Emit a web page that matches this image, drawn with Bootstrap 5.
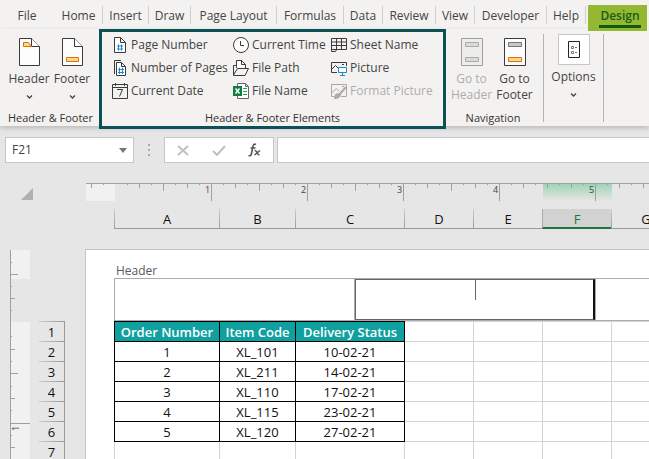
<!DOCTYPE html>
<html lang="en">
<head>
<meta charset="utf-8">
<meta name="viewport" content="width=device-width, initial-scale=1">
<title>Header &amp; Footer Elements</title>
<link href="https://cdn.jsdelivr.net/npm/bootstrap@5.3.0/dist/css/bootstrap.min.css" rel="stylesheet">
<style>
  body { font-family: "Open Sans", "Noto Sans", sans-serif; font-size: 12px; line-height: 16px; color: #444; background: #e6e6e6; }
  button { color: inherit; background: none; border: 0; padding: 0; }
  svg { display: block; flex: none; }

  /* Ribbon tabs */
  .tabs { display: grid; grid-template-columns: 55px 48px 46px 42px 86px 67px 39px 53px 39px 72px 39px 61px; height: 29px; background: #f3f2f1; }
  .tabs a { color: #444; text-decoration: none; text-align: center; white-space: nowrap; margin-top: 6px; height: 18px; line-height: 19px; border-right: 1px solid #d0cfce; }
  .tabs a:first-child { border-color: transparent; }
  .tabs a.active { margin: 5px 0 0 2px; height: 26px; line-height: 21px; background: #95b833; color: #185c18; font-weight: 600; border: 0; z-index: 2; padding: 0 6px 0 11px; }
  .tabs a.active span { display: block; height: 23px; border-bottom: 3px solid #10590f; }

  /* Ribbon groups */
  .ribbon { height: 97px; background: #f3f2f1; box-shadow: 0 2px 5px rgba(0,0,0,.2); position: relative; z-index: 1; }
  .group { display: flex; flex-direction: column; justify-content: space-between; align-items: center; padding-top: 9px; }
  .caption { height: 16px; color: #333; font-size: 11px; white-space: nowrap; }
  .framed { width: 347px; height: 100px; border: 3px solid #0b5156; padding-top: 1px; }
  .commands { display: grid; grid-template-columns: 121px 98px 102px; grid-auto-flow: column; grid-template-rows: repeat(3, 23px); width: 100%; padding-left: 10px; }
  .commands button { display: flex; align-items: center; gap: 3px; white-space: nowrap; }
  .big { width: 43px; display: flex; flex-direction: column; align-items: center; white-space: nowrap; }
  .big svg:first-child { margin-bottom: 5px; }
  .big:disabled, .commands button:disabled { opacity: .4; }
  .rule { width: 1px; height: 88px; margin-top: 5px; background: #b5b5b5; }
  .g-one { width: 99px; padding-left: 2px; }
  .g-nav { width: 97px; padding-right: 3px; }
  .g-opt { width: 59px; padding-top: 5px; justify-content: flex-start; }
  .optbox { border: 1px solid #c6c6c6; background: #fff; padding: 6px 9px; margin-bottom: 4px; }

  /* Formula bar */
  .fbar { padding: 11px 0 0 5px; gap: 3px; }
  .field { height: 26px; background: #fff; border: 1px solid #c6c6c6; border-radius: 0; outline: 0; }
  .namebox { width: 129px; padding: 0 6px; }
  .namebox input { border: 0; outline: 0; width: 90px; color: #444; padding: 0; }
  .dots { width: 24px; }
  .tools { width: 110px; padding: 0 12px; }
  .formula { flex: 1; min-width: 0; border-right: 0; }

  /* Rulers and headings */
  .hgrid { padding-top: 20px; }
  .corner { width: 86px; padding: 4px 0 0 21px; }
  .hruler { flex: 1; min-width: 0; }
  .hruler text, .vruler text { font-size: 9px; fill: #444; }
  .cols { height: 20px; margin: 8px 0 20px 114px; font-size: 13px; line-height: 20px; color: #111; overflow: hidden; background: linear-gradient(#999,#999) bottom/100% 1px no-repeat; }
  .cols div { flex: none; width: 69px; padding-left: 1px; text-align: center; background: linear-gradient(#ccc,#999) left/1px 100% no-repeat; }
  .w-a, .cols .w-a { width: 105px; }
  .w-b, .cols .w-b { width: 76px; }
  .w-c, .cols .w-c { width: 109px; }
  .w-d { width: 69px; }
  .cols .sel { background: #d2d2d2; color: #217346; border-bottom: 2px solid #217346; border-left: 1px solid #aaa; padding: 0; }
  .side { padding-left: 10px; gap: 9px; width: 85px; flex: none; }
  .rows { width: 26px; margin-top: 72px; font-size: 13px; line-height: 22px; color: #111; border-right: 1px solid #999; }
  .rows div { height: 20px; text-align: center; background: linear-gradient(90deg,#ccc,#999) top/100% 1px no-repeat; }

  /* Sheet */
  .sheet { background: #fff; border: solid #c3c3c3; border-width: 1px 0 0 1px; padding-left: 28px; overflow: hidden; }
  .hlabel { height: 28px; padding: 13px 0 0 2px; color: #5a5a5a; }
  .heads { height: 43px; border: solid #ababab; border-width: 1px 0 1px 1px; }
  .heads .slot { width: 239px; }
  .heads .edit { width: 242px; position: relative; border: solid #ababab; border-width: 0 1px; }
  .heads textarea { display: block; width: 100%; height: 41px; border: 1px solid #666; border-right: 2px solid #111; resize: none; outline: 0; }
  .caret { position: absolute; left: 50%; top: 1px; width: 1px; height: 20px; background: #666; }
  .cells { table-layout: fixed; width: 100%; min-width: 536px; border-collapse: collapse; font-size: 13px; line-height: 18px; color: #111; text-align: center; }
  .cells td, .cells th { height: 20px; padding: 1px 0 0; border: 1px solid #d4d4d4; white-space: nowrap; }
  .cells .bx { border-color: #000; }
  .cells th { background: #10a0a0; color: #fff; font-weight: 600; }
</style>
<script src="https://cdn.jsdelivr.net/npm/bootstrap@5.3.0/dist/js/bootstrap.bundle.min.js"></script>
</head>
<body class="d-flex flex-column vh-100 overflow-hidden">
<svg width="0" height="0" class="position-absolute" aria-hidden="true">
  <symbol id="page" viewBox="0 0 21 28"><path d="M.5.5H12.5L20.5 8.5V27.5H.5Z" fill="#fdfdfd" stroke="#3b3b3b"/><path d="M12.5.5V8.5H20.5" fill="#fff" stroke="#3b3b3b"/></symbol>
  <symbol id="chev" viewBox="0 0 7 4"><path d="M1 .5 3.500 3 6 .5" fill="none" stroke="#444" stroke-width="1.300"/></symbol>
</svg>

<nav class="tabs flex-shrink-0" aria-label="Ribbon tabs">
  <a href="#">File</a><a href="#">Home</a><a href="#">Insert</a><a href="#">Draw</a><a href="#">Page Layout</a><a href="#">Formulas</a><a href="#">Data</a><a href="#">Review</a><a href="#">View</a><a href="#">Developer</a><a href="#">Help</a><a href="#" class="active"><span>Design</span></a>
</nav>

<div class="ribbon d-flex flex-shrink-0">
  <section class="group g-one">
    <div class="d-flex">
      <button class="big"><svg width="21" height="28"><use href="#page"/><path d="M4.500 4.500H9.500L12.500 8.500H4.500Z" fill="#fbd88f" stroke="#e07000"/></svg>Header<svg width="7" height="4" class="mt-2"><use href="#chev"/></svg></button>
      <button class="big"><svg width="21" height="28"><use href="#page"/><path d="M4.500 19.500H16.500V23.500H4.500Z" fill="#fbd88f" stroke="#e07000"/></svg>Footer<svg width="7" height="4" class="mt-2"><use href="#chev"/></svg></button>
    </div>
    <div class="caption">Header &amp; Footer</div>
  </section>

  <section class="group framed">
    <div class="commands">
      <button><svg width="16" height="16"><path d="M2.500.5H8.500L13.500 5.500V15.500H2.500ZM8.500.5V5.500H13.500" fill="#fff" stroke="#3b3b3b"/><path d="M6.500 7.500V13.500M9.500 7.500V13.500M5 9H11M5 12H11" stroke="#1e88cf"/></svg>Page Number</button>
      <button><svg width="16" height="16"><path d="M2.500 14V.5H9" fill="none" stroke="#3b3b3b"/><path d="M4.500 2.500H9.500L13.500 6.500V15.500H4.500ZM9.500 2.500V6.500H13.500" fill="#fff" stroke="#3b3b3b"/><path d="M7.500 7.500V14M10.500 7.500V14M6 9.500H12M6 12.500H12" stroke="#1e88cf"/></svg>Number of Pages</button>
      <button><svg width="16" height="16"><path d="M.5 1.500H15.500V15.500H.5ZM.5 4.500H15.500M3.500 0V3M12.500 0V3" fill="none" stroke="#3b3b3b"/><path d="M5 6.500H10.500L7.500 13.500" fill="none" stroke="#3b3b3b"/></svg>Current Date</button>
      <button><svg width="16" height="16"><circle cx="8" cy="8" r="7.500" fill="#fff" stroke="#3b3b3b"/><path d="M7.500 4V8.500H11" fill="none" stroke="#3b3b3b"/></svg>Current Time</button>
      <button><svg width="16" height="16"><path d="M3.500 8V.5H8.500L12.500 4.500V9M8.500.5V4.500H12.500" fill="#fff" stroke="#3b3b3b"/><path d="M3.500 5.500H.5V15.500H12L15.500 8.500H4.500L.5 15" fill="#f3f2f1" stroke="#3b3b3b"/></svg>File Path</button>
      <button><svg width="16" height="16"><path d="M4.500.5H12.500L15.500 3.500V15.500H4.500ZM12.500.5V3.500H15.500" fill="#fff" stroke="#666"/><path d="M10 5.500H14M10 8.500H14M10 11.500H14" stroke="#21a366"/><path d="M0 3H9V13H0Z" fill="#107c41"/><path d="M2.500 5.500 6.500 10.500M6.500 5.500 2.500 10.500" stroke="#fff" stroke-width="1.500"/></svg>File Name</button>
      <button><svg width="16" height="16"><path d="M.5 1.500H15.500V12.500H5.500L4.500 14.500H.5ZM.5 5H15.500M.5 8.500H15.500M.5 12.500H6M5.500 1.500V12.500M10.500 1.500V12.500" fill="none" stroke="#3b3b3b"/></svg>Sheet Name</button>
      <button><svg width="16" height="16"><path d="M6 12.500H.5V2.500H15.500V6M.5 9.500 4.500 5.500 7 8M11 4.500H13" fill="none" stroke="#3b3b3b"/><path d="M7.500 7.500H15.500V12.500H7.500ZM11.500 12.500V15M9 15.500H14" fill="#fff" stroke="#1e88cf"/></svg>Picture</button>
      <button disabled><svg width="16" height="16"><path d="M3 13.500H.5V1.500H15.500V13.500H10M.5 10 5.500 5.500 8.500 8.500M11 3.500H13" fill="none" stroke="#3b3b3b"/><path d="M15 4 8 12M7 11Q4 12 4 15Q8 15 9 12Z" fill="#555" stroke="#444" stroke-width="2"/></svg>Format Picture</button>
    </div>
    <div class="caption">Header &amp; Footer Elements</div>
  </section>

  <section class="group g-nav">
    <div class="d-flex">
      <button class="big" disabled><svg width="22" height="28"><path d="M.5.5H21.500V27.500H.5Z" fill="#e6e6e6" stroke="#222"/><path d="M4.500 4.500H17.500V8.500H4.500ZM4.500 19.500H17.500V23.500H4.500Z" fill="#bbb" stroke="#444"/></svg>Go to<br>Header</button>
      <button class="big"><svg width="22" height="28"><path d="M.5.5H21.500V27.500H.5Z" fill="#fdfdfd" stroke="#3b3b3b"/><path d="M4.500 4.500H17.500V8.500H4.500Z" fill="#c8c8c8" stroke="#777"/><path d="M4.500 19.500H17.500V23.500H4.500Z" fill="#fbd88f" stroke="#e07000"/></svg>Go to<br>Footer</button>
    </div>
    <div class="caption">Navigation</div>
  </section>
  <div class="rule"></div>
  <section class="group g-opt">
    <button class="d-flex flex-column align-items-center"><span class="optbox"><svg width="12" height="17"><path d="M.5.5H11.500V16.500H.5Z" fill="#fff" stroke="#222"/><path d="M3.500 5.500H5.500V7.500H3.500ZM3.500 10.500H5.500V12.500H3.500ZM7 6.500H9M7 11.500H9" fill="none" stroke="#777"/></svg></span>Options<svg width="7" height="4" class="mt-2"><use href="#chev"/></svg></button>
  </section>
  <div class="rule"></div>
</div>

<div class="fbar d-flex align-items-center flex-shrink-0">
  <div class="field namebox d-flex align-items-center justify-content-between"><input type="text" value="F21" aria-label="Name box"><svg width="8" height="5"><path d="M0 0H8L4 5Z" fill="#777"/></svg></div>
  <div class="dots d-flex justify-content-center"><svg width="2" height="12"><path d="M0 0H2V2H0ZM0 5H2V7H0ZM0 10H2V12H0Z" fill="#aaa"/></svg></div>
  <div class="field tools d-flex align-items-center justify-content-between">
    <button aria-label="Cancel"><svg width="12" height="11"><path d="M1 1 11 10M11 1 1 10" stroke="#c0c0c0" stroke-width="2"/></svg></button>
    <button aria-label="Enter"><svg width="14" height="11"><path d="M1 6 5 10 13 1" fill="none" stroke="#c0c0c0" stroke-width="2"/></svg></button>
    <button aria-label="Insert function"><svg width="13" height="14"><path d="M8 1.500Q5.500 0 4.800 4L3.500 10.500Q3 13.500.5 12.500M2.500 5H7.500" fill="none" stroke="#555" stroke-width="1.600"/><path d="M6.500 7.500Q8 7 9 9.500T11.500 12M12 7.500 6.500 12" fill="none" stroke="#555" stroke-width="1.500"/></svg></button>
  </div>
  <input type="text" class="field formula" aria-label="Formula bar">
</div>

<div class="hgrid flex-shrink-0">
  <div class="d-flex">
    <div class="corner"><svg width="12" height="13"><path d="M12 1V13H0Z" fill="#b0b0b0"/></svg></div>
    <svg class="hruler" width="100%" height="18">
      <defs>
        <linearGradient id="glow" x2="0" y2="1"><stop stop-color="#9bd3b3"/><stop offset="1" stop-color="#e6e6e6"/></linearGradient>
      </defs>
      <rect width="29" height="18" fill="#f1f1f1"/>
      <rect x="457" width="69" height="18" fill="url(#glow)"/>
      <path d="M5.500 0V5M17.500 1V2M41.500 1V2M53.500 0V5M65.500 1V2M77.500 0V8M89.500 1V2M101.500 0V5M113.500 1V2M125.500 0V18M137.500 1V2M149.500 0V5M161.500 1V2M173.500 0V8M185.500 1V2M197.500 0V5M209.500 1V2M221.500 0V18M233.500 1V2M245.500 0V5M257.500 1V2M269.500 0V8M281.500 1V2M293.500 0V5M305.500 1V2M317.500 0V18M329.500 1V2M341.500 0V5M353.500 1V2M365.500 0V8M377.500 1V2M389.500 0V5M401.500 1V2M413.500 0V18M425.500 1V2M437.500 0V5M449.500 1V2M461.500 0V5M473.500 1V2M485.500 0V5M497.500 1V2M509.500 0V18M521.500 1V2M533.500 0V5M545.500 1V2M557.500 0V5" stroke="#a0a0a0"/>
      <path d="M0 .5H4000" stroke="#a0a0a0"/>
      <text x="119" y="10">1</text><text x="215" y="10">2</text><text x="311" y="10">3</text><text x="407" y="10">4</text><text x="503" y="10">5</text>
    </svg>
  </div>
  <div class="cols d-flex"><div class="w-a">A</div><div class="w-b">B</div><div class="w-c">C</div><div>D</div><div>E</div><div class="sel">F</div><div>G</div></div>
</div>

<main class="d-flex flex-grow-1 overflow-hidden">
  <div class="side d-flex">
    <svg class="vruler" width="20" height="230">
      <path d="M1 1H20V30H1ZM1 73H20V230H1Z" fill="#f1f1f1"/>
      <path d="M.5 1V230M1 13.500H2M1 25.500H8M1 37.500H2M1 49.500H5M1 61.500H2M1 87.500H2M1 100.500H5M1 112.500H2M1 124.500H8M1 137.500H2M1 149.500H5M1 161.500H2M1 174.500H20M1 186.500H2M1 198.500H5" fill="none" stroke="#a0a0a0"/>
      <text transform="translate(9 182) rotate(-90)">1</text>
    </svg>
    <div class="rows"><div>1</div><div>2</div><div>3</div><div>4</div><div>5</div><div>6</div><div>7</div></div>
  </div>
  <div class="sheet flex-grow-1">
    <div class="hlabel">Header</div>
    <div class="heads d-flex">
      <div class="slot"></div>
      <div class="edit"><textarea aria-label="Center header section"></textarea><span class="caret"></span></div>
    </div>
    <table class="cells">
      <colgroup><col class="w-a"><col class="w-b"><col class="w-c"><col class="w-d"><col class="w-d"><col class="w-d"><col></colgroup>
      <tbody>
        <tr><th class="bx" scope="col">Order Number</th><th class="bx" scope="col">Item Code</th><th class="bx" scope="col">Delivery Status</th><td></td><td></td><td></td><td></td></tr>
        <tr><td class="bx">1</td><td class="bx">XL_101</td><td class="bx">10-02-21</td><td></td><td></td><td></td><td></td></tr>
        <tr><td class="bx">2</td><td class="bx">XL_211</td><td class="bx">14-02-21</td><td></td><td></td><td></td><td></td></tr>
        <tr><td class="bx">3</td><td class="bx">XL_110</td><td class="bx">17-02-21</td><td></td><td></td><td></td><td></td></tr>
        <tr><td class="bx">4</td><td class="bx">XL_115</td><td class="bx">23-02-21</td><td></td><td></td><td></td><td></td></tr>
        <tr><td class="bx">5</td><td class="bx">XL_120</td><td class="bx">27-02-21</td><td></td><td></td><td></td><td></td></tr>
        <tr><td></td><td></td><td></td><td></td><td></td><td></td><td></td></tr>
      </tbody>
    </table>
  </div>
</main>
</body>
</html>
